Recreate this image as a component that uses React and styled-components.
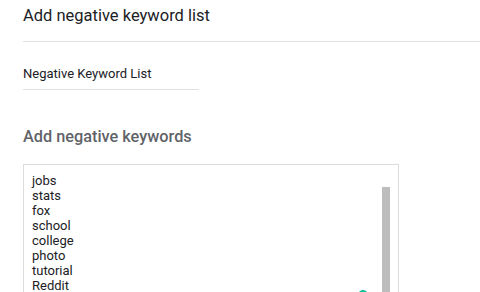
import React from "react";
import styled, { createGlobalStyle } from "styled-components";

const Global = createGlobalStyle`
  html, body { margin: 0; padding: 0; background: #fff; overflow: hidden; }
  body { font-family: Roboto, "Noto Sans", Arial, sans-serif; }
`;

const Page = styled.div`
  width: 480px;
  height: 292px;
  padding-left: 23px;
  box-sizing: border-box;
  overflow: hidden;
`;

const Title = styled.h2`
  margin: 0;
  padding-top: 5px;
  height: 36px;
  box-sizing: border-box;
  font-size: ${(p) => (p.$muted ? "16.3px" : "16.5px")};
  line-height: 22px;
  font-weight: ${(p) => (p.$muted ? 500 : 400)};
  color: ${(p) => (p.$muted ? "#5f6368" : "#202124")};
`;

const Divider = styled.div`
  height: 1px;
  background: #e0e0e0;
  margin-top: 5px;
`;

const Field = styled.div`
  width: 176px;
  margin-top: 24px;
  font-size: 13px;
  line-height: 16px;
  color: #202124;
  padding-bottom: 7px;
  border-bottom: 1px solid #e0e0e0;
`;

const Section = styled.div`
  margin-top: 31px;
`;

const Box = styled.div`
  position: relative;
  margin-top: 7px;
  width: 376px;
  height: 170px;
  box-sizing: border-box;
  border: 1px solid #dadce0;
  display: flex;
  padding: 8px 8px 0 8px;
`;

const List = styled.div`
  flex: 1;
  font-size: 13px;
  line-height: 15px;
  color: #202124;
`;

const Thumb = styled.div`
  width: 8px;
  margin-top: 14px;
  background: #bdbdbd;
`;

const Badge = styled.div`
  position: absolute;
  left: 334px;
  top: 125px;
  width: 10px;
  height: 10px;
  border-radius: 50%;
  background: #15c39a;
`;

const words = ["jobs", "stats", "fox", "school", "college", "photo", "tutorial", "Reddit"];

export default function App() {
  return (
    <Page>
      <Global />
      <Title>Add negative keyword list</Title>
      <Divider />
      <Field>Negative Keyword List</Field>
      <Section>
        <Title $muted>Add negative keywords</Title>
        <Box>
          <List>
            {words.map((w) => (
              <div key={w}>{w}</div>
            ))}
          </List>
          <Thumb />
          <Badge />
        </Box>
      </Section>
    </Page>
  );
}
